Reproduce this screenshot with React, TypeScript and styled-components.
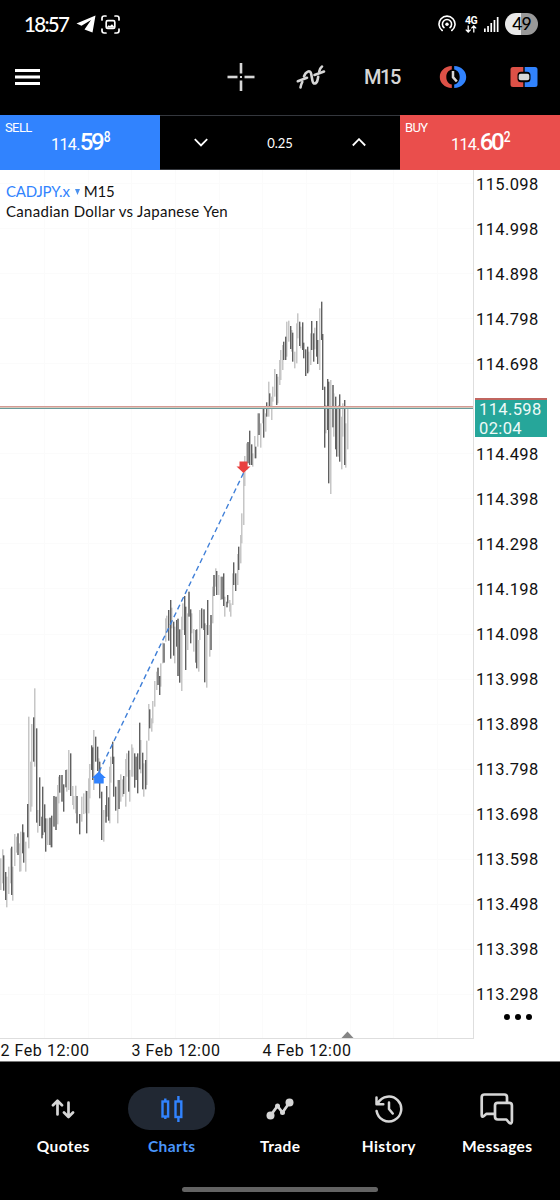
import React from 'react';
import styled, { createGlobalStyle } from 'styled-components';

const GlobalStyle = createGlobalStyle`
  * { box-sizing: border-box; }
  body { margin: 0; background: #000; }
`;

const BLUE = '#3183fe';
const RED = '#ea4e4c';
const ICON = '#d6d6d6';
const HAND = `'Lato', 'Open Sans', sans-serif`;

const Screen = styled.div`
  width: 560px;
  height: 1200px;
  display: flex;
  flex-direction: column;
  overflow: hidden;
  background: #000;
  font-family: Roboto, sans-serif;
`;

const StatusBar = styled.div`
  height: 48px;
  padding: 0 22px 0 24px;
  display: flex;
  align-items: center;
  color: #fff;
  svg { display: block; flex: none; }
`;
const Clock = styled.span`
  width: 47px;
  margin-right: 5px;
  font: 500 20.5px/24px ${HAND};
  letter-spacing: -1.7px;
  white-space: nowrap;
`;
const StatusIcons = styled.div`
  margin-left: auto;
  display: flex;
  align-items: center;
`;
const Network = styled.div`
  width: 14px;
  margin: 0 6px 0 8px;
  display: flex;
  flex-direction: column;
  align-items: center;
  font: 700 10.5px/9px Roboto, sans-serif;
  letter-spacing: -0.5px;
`;
const Battery = styled.div`
  width: 33px;
  height: 22px;
  margin-left: 6px;
  border-radius: 11px;
  background: linear-gradient(90deg, #e9e9e9 49%, #999 49%);
  color: #000;
  font: 500 17.5px/22px ${HAND};
  letter-spacing: -1px;
  text-align: center;
`;

const Toolbar = styled.div`
  height: 67px;
  padding: 0 22px 9px 14px;
  display: flex;
  align-items: center;
  svg { display: block; flex: none; }
`;
const Tools = styled.div`
  margin-left: auto;
  display: flex;
  align-items: center;
`;
const Timeframe = styled.span`
  width: 36px;
  margin: 0 39px 0 38px;
  color: ${ICON};
  font: 500 20px/24px Roboto, sans-serif;
  white-space: nowrap;
  letter-spacing: -1.4px;
`;

const TradeBar = styled.div`
  height: 55px;
  display: grid;
  grid-template-columns: 160px 240px 160px;
`;
const Quote = styled.div<{ $color: string }>`
  padding: 5px 5px 0 5px;
  background: ${(p) => p.$color};
  color: #fff;
`;
const Side = styled.div`
  height: 14px;
  font: 400 13px/15px Roboto, sans-serif;
  letter-spacing: -0.6px;
`;
const Price = styled.div`
  height: 24px;
  margin-left: 46px;
  margin-top: -5px;
  display: flex;
  align-items: baseline;
  font: 400 16px/26px Roboto, sans-serif;
  letter-spacing: -0.6px;
  b { font-size: 24px; font-weight: 500; letter-spacing: -2.4px; margin-right: 2px; }
  sup { font-size: 15px; font-weight: 500; line-height: 1; vertical-align: baseline; transform: translate(-1px, -8.5px) scaleX(0.8); }
`;
const Volume = styled.div`
  display: flex;
  align-items: center;
  justify-content: space-between;
  padding: 0 34px;
  border-top: 1px solid #34373d;
  border-bottom: 1px solid #34373d;
  color: #fff;
  font: 400 13px/20px ${HAND};
`;

const ChartArea = styled.main`
  height: 892px;
  background: #fff;
  display: grid;
  grid-template-columns: 474px 86px;
  grid-template-rows: 869px 23px;
`;
const Plot = styled.div`
  position: relative;
  border-right: 1px solid #dedede;
  border-bottom: 1px solid #dedede;
  svg { display: block; }
`;
const Legend = styled.div`
  position: absolute;
  left: 6px;
  top: 11px;
  color: #111;
  font: 400 15px/20px ${HAND};
  white-space: nowrap;
`;
const SymbolRow = styled.div`
  display: flex;
  align-items: center;
  letter-spacing: -0.2px;
  i { color: ${BLUE}; font-style: normal; }
  svg { margin: 2px 4px 0 5px; }
`;
const Description = styled.div`
  letter-spacing: 0.3px;
`;
const PriceAxis = styled.div`
  padding: 4.5px 0 0 2px;
  display: flex;
  flex-direction: column;
  gap: 25.05px;
  color: #111;
  font-size: 16.5px;
  line-height: 20px;
  letter-spacing: 0.38px;
`;
const Tick = styled.div`
  position: relative;
  height: 20px;
  flex: none;
`;
const PriceTag = styled.div`
  position: absolute;
  left: -1px;
  top: -2px;
  width: 71.5px;
  height: 39px;
  padding: 0 0 0 4px;
  border-top: 2px solid #c0655f;
  background: #26a69a;
  color: #eefaf8;
  line-height: 19px;
`;
const More = styled.div`
  margin-top: -17px;
  padding-left: 27px;
  svg { display: block; }
`;
const TimeAxis = styled.div`
  grid-column: 1 / 3;
  display: flex;
  color: #111;
  font-size: 16px;
  line-height: 23px;
  letter-spacing: 0.55px;
  border-bottom: 1px solid #777;
`;
const Time = styled.span`
  width: 131px;
  padding-left: 0.5px;
  white-space: nowrap;
`;

const Nav = styled.nav`
  height: 128px;
  padding: 25px 9px 0;
  display: grid;
  grid-template-columns: repeat(5, 108.5px);
  align-content: start;
`;
const NavItem = styled.div<{ $active?: boolean }>`
  display: flex;
  flex-direction: column;
  align-items: center;
  gap: 5px;
  color: ${(p) => (p.$active ? '#4a96fb' : '#fff')};
  font: 700 15.5px/22px ${HAND};
  letter-spacing: 0.4px;
`;
const Pill = styled.div<{ $active?: boolean }>`
  width: 87px;
  height: 43px;
  border-radius: 22px;
  display: flex;
  align-items: center;
  justify-content: center;
  background: ${(p) => (p.$active ? '#212833' : 'transparent')};
  svg { display: block; }
`;
const HomeHandle = styled.div`
  width: 196px;
  height: 5px;
  margin: -3px auto 0;
  border-radius: 3px;
  background: #636363;
`;

/* Each bar is "x top bottom shade" in thirds of a pixel from its block's origin. */
const BLOCKS = [
  {
    x: 0, y: 670,
    bars: `2 565 660 L;8 538 640 L;12 556 662 D;16 606 690 D;21 620 712 L;26 590 672 L;31 535 640 L;34 530 675 D;39 590 692 L;44 492 588 L;49 500 548 L;53 490 555 M;58 520 605 L;63 485 604 L;67 463 550 D;72 487 578 D;77 515 605 L;82 402 502 D;86 140 535 L;91 275 425 L;95 162 410 L;100 142 275 D;105 55 290 L;109 175 458 D;114 420 488 L;119 322 468 D;124 440 505 M;128 350 495 D;133 403 487 D;138 445 545 D;142 445 525 L;148 443 525 M;151 495 532 L;156 437 532 D;162 378 470 M;167 380 480 M;172 345 463 L;176 320 400 L;180 315 368 D;185 315 395 M;190 343 425 D;196 300 352 M;201 298 365 L;207 240 360 L;212 250 378 D;217 348 405 L;221 378 418 L;226 347 430 L;231 378 460 M;240 432 493 D;246 380 455 L;251 370 432 L;256 362 430 L;260 363 490 D;265 325 430 L;270 282 385 L;274 226 300 D;278 232 330 D;282 180 360 L;287 200 275 D;292 230 303 D;296 265 340 L;300 275 385 D;306 365 510 D;311 420 515 L;316 405 458 M;320 348 440 D;325 382 452 D`,
  },
  {
    x: 90, y: 580,
    bars: `58 560 730 L;62 530 608 L;67 485 552 D;72 530 650 D;77 620 692 D;83 600 730 L;87 600 687 M;92 583 665 L;97 598 650 L;100 588 642 D;106 537 680 L;111 520 590 L;115 512 635 D;120 570 665 L;125 493 590 L;129 503 590 L;133 520 623 D;138 530 600 M;143 520 640 D;148 428 568 D;152 480 580 L;157 518 628 D;162 550 650 L;167 540 628 D;171 482 615 L;175 372 482 L;180 388 445 D;184 415 455 L;189 363 430 L;194 303 380 L;199 275 330 L;204 263 315 M;208 288 345 D;213 250 320 L;218 188 250 L;222 190 248 M;227 115 185 L;231 107 150 L;236 90 182 D;241 60 236 D;246 83 145 L;250 125 227 D;255 140 250 L;260 120 200 D;264 116 288 M;269 148 308 D;274 110 333 L;279 70 150 L;284 48 165 D;288 80 270 D;293 100 210 L;297 35 110 M;301 88 190 D;306 100 160 L;312 147 215 L;316 150 248 M;320 148 265 D;325 180 275 L;330 90 180 L;335 85 145 D;340 88 150 M;345 130 307 D;349 135 323 L;353 60 165 D;358 135 230 L;363 105 210 M;367 20 130 L`,
  },
  {
    x: 160, y: 430,
    bars: `162 435 498 M;167 415 470 L;171 423 495 D;176 435 495 L;181 440 510 L;186 440 508 M;190 430 528 D;195 500 560 L;200 515 532 M;204 495 520 D;209 510 545 L;213 520 560 L;217 430 525 L;222 397 465 D;227 430 483 D;232 372 465 L;236 350 420 D;241 315 400 L;245 250 340 L;250 100 285 L`,
  },
  {
    x: 240, y: 290,
    bars: `15 498 588 L;20 460 540 L;24 456 520 M;29 422 525 D;34 463 525 D;39 490 530 L;43 438 505 L;48 470 505 D;53 370 470 L;57 370 435 M;62 400 473 L;67 355 400 L;71 353 443 D;76 370 425 L;81 337 380 D;85 275 380 L;90 310 350 D;95 320 390 L;99 290 335 L;104 237 320 L;109 252 345 D;113 260 340 L;118 210 285 L;123 180 270 L;127 165 240 L;132 155 210 D;137 140 210 D;141 95 200 L;146 92 155 L;151 108 177 D;155 120 185 L;159 128 215 D;164 185 235 L;169 100 220 L;174 70 145 L;179 95 168 D;183 110 175 L;188 97 180 D;192 158 205 D;197 178 258 D;202 170 250 D;206 185 245 L;211 130 225 L;216 93 180 D;220 130 215 D;225 113 178 L;230 93 200 D;234 150 222 D;239 55 240 L;244 35 150 D;248 132 300 D;253 290 473 D;258 345 430 L;262 267 420 D;267 275 580 D;272 270 612 L;277 285 412 M;281 310 440 L;286 320 478 D;291 350 500 D;295 345 500 L;300 313 515 D;305 380 538 L;309 340 440 L;314 330 525 D;318 400 533 L;323 355 478 L`,
  },
];
const SHADES: Record<string, { fill: string; width: number }> = {
  L: { fill: '#c6c6c6', width: 1.5 },
  M: { fill: '#868686', width: 2 },
  D: { fill: '#606060', width: 1.4 },
};
const BARS = BLOCKS.flatMap((block) =>
  block.bars.split(';').map((item) => {
    const [x, top, bottom, shade] = item.split(' ');
    return {
      x: block.x + Math.round(Number(x) / 3 - 0.7),
      y: block.y - 170 + Number(top) / 3,
      h: (Number(bottom) - Number(top)) / 3,
      shade,
    };
  }),
).sort((a, b) => Number(b.shade === 'L') - Number(a.shade === 'L'));
const GRID_X = [44, 88, 131, 175, 219, 262, 306, 350, 393, 437];
const TICKS = Array.from({ length: 19 }, (_, i) => (115.098 - i / 10).toFixed(3));

const PriceChart = () => (
  <svg width="473" height="868" viewBox="0 0 473 868">
    {GRID_X.map((x) => <rect key={x} x={x} y="0" width="1" height="868" fill="#fbfbfb" />)}
    {TICKS.map((t, i) => <rect key={t} x="0" y={Math.round(13 + i * 45.05)} width="473" height="1" fill="#fbfbfb" />)}
    {BARS.map((b, i) => (
      <rect key={i} x={b.x} y={b.y} width={SHADES[b.shade].width} height={b.h} fill={SHADES[b.shade].fill} />
    ))}
    <rect x="0" y="236" width="473" height="1" fill="#d49a94" />
    <rect x="0" y="237" width="473" height="1" fill="#d9c9bb" />
    <rect x="0" y="238" width="473" height="1" fill="#6b9c9c" />
    <path d="M99 602 244 302" stroke="#3f7fd8" strokeWidth="1.4" strokeDasharray="5.2 3.4" />
    <path d="m98.900 601.500 7 6.500h-2.200v5.500h-9.600v-5.500h-2.200z" fill={BLUE} />
    <path d="m243.500 303-7-6.500h3v-5h8v5h3z" fill="#e9403f" />
    <path d="m341.500 868 6-6.500 6 6.500z" fill="#858585" />
  </svg>
);

const TelegramIcon = () => (
  <svg width="20" height="18" viewBox="0 0 20 18">
    <path d="M.5 8.500 19.500.5 16.500 17.500 8.500 14.500 15 5 5.500 10.800z" fill="#fff" />
  </svg>
);
const CaptureIcon = () => (
  <svg width="19" height="19" viewBox="0 0 19 19" fill="none" stroke="#fff" strokeWidth="1.7" strokeLinecap="round">
    <path d="M1 5V3.200Q1 1 3.200 1H5M14 1h1.800Q18 1 18 3.200V5M18 14v1.800q0 2.200-2.200 2.200H14M5 18H3.200Q1 18 1 15.800V14" />
    <rect x="5.200" y="5.700" width="8.600" height="7.800" rx="1.500" />
    <path d="m6 12 1.600-1.800 1.400.8 2-1.800 2 2.300v1.200H6z" fill="#fff" stroke="none" />
  </svg>
);
const HotspotIcon = () => (
  <svg width="18" height="18" viewBox="0 0 18 18" fill="none" stroke="#fff" strokeWidth="1.6" strokeLinecap="round">
    <path d="M4.200 15.500a8 8 0 1 1 9.600 0" />
    <path d="M6 12.600a4.600 4.600 0 1 1 6 0" />
    <circle cx="9" cy="9.300" r="1.700" fill="#fff" stroke="none" />
  </svg>
);
const DataArrows = () => (
  <svg width="12" height="8" viewBox="0 0 12 8" fill="none" stroke="#fff" strokeWidth="1.300">
    <path d="M3.200.5V7M.8 4.600 3.200 7l2.400-2.400M8.800 7.500V1M6.400 3.400 8.800 1l2.400 2.400" />
  </svg>
);
const SignalIcon = () => (
  <svg width="15" height="16" viewBox="0 0 15 16" fill="#fff">
    <rect x="0" y="12.500" width="1.700" height="3.500" /><rect x="3.200" y="10" width="1.700" height="6" />
    <rect x="6.400" y="7" width="1.700" height="9" /><rect x="9.600" y="4" width="1.700" height="12" />
    <rect x="12.800" y="1" width="1.700" height="15" />
  </svg>
);
const MenuIcon = () => (
  <svg width="26" height="18" viewBox="0 0 26 18" fill="#fff">
    <rect x="1" y="1" width="25" height="3" /><rect x="1" y="7.500" width="25" height="3" /><rect x="1" y="14" width="25" height="3" />
  </svg>
);
const CrosshairIcon = () => (
  <svg width="28" height="28" viewBox="0 0 28 28" fill={ICON}>
    <rect x="12.700" y="0" width="2.600" height="10.500" /><rect x="12.700" y="17.500" width="2.600" height="10.500" />
    <rect x="0.500" y="12.700" width="10" height="2.600" /><rect x="17.500" y="12.700" width="10" height="2.600" />
    <rect x="13" y="13" width="2" height="2" />
  </svg>
);
const IndicatorIcon = () => (
  <svg width="30" height="26" viewBox="0 0 30 26" fill="none" stroke={ICON} strokeWidth="2.600" strokeLinecap="round">
    <path d="M1.800 17.200 11 13.800M18.500 11 28 7.500" />
    <path d="M4.500 23.500C5 20.500 5.500 19.500 6.300 18M8 12.500C9.500 7.800 14.300 5 15.200 10l1.200 6.500c.9 4.800 4.500 3.600 5.300-1.200l.5-2.500M23.200 7.500c.6-2.200 1.200-3.800 2.800-5" />
  </svg>
);
const SessionIcon = () => (
  <svg width="28" height="24" viewBox="0 0 28 24">
    <path d="M12.800 1v3.400C9.500 5 7.300 8 7.300 12s2.200 7 5.500 7.600V23C5.500 22.500.8 18 .8 12S5.500 1.500 12.800 1z" fill="#dd5147" />
    <path d="M15.200 1v3.400c3.300.6 5.500 3.600 5.500 7.600s-2.200 7-5.500 7.600V23c7.300-.5 12-5 12-11s-4.700-10.500-12-11z" fill={BLUE} />
    <path d="M14 6v6.200l3.800 4.300" fill="none" stroke={ICON} strokeWidth="2.500" />
  </svg>
);
const OneClickIcon = () => (
  <svg width="28" height="22" viewBox="0 0 28 22">
    <path d="M3 1h10.300v4.800H11A3.500 3.500 0 0 0 7.500 9.300v3.400a3.500 3.500 0 0 0 3.500 3.500h2.300V21H3q-2.500 0-2.500-2.500v-15Q.5 1 3 1z" fill="#dd5147" />
    <path d="M25 1H14.700v4.800H17a3.500 3.500 0 0 1 3.500 3.500v3.400a3.500 3.500 0 0 1-3.500 3.500h-2.300V21H25q2.500 0 2.500-2.500v-15Q27.500 1 25 1z" fill={BLUE} />
    <rect x="8.700" y="7.700" width="10.600" height="6.600" rx="2" fill={ICON} />
  </svg>
);
const Chevron = ({ up }: { up?: boolean }) => (
  <svg width="14" height="9" viewBox="0 0 14 9" fill="none" stroke="#fff" strokeWidth="1.800">
    <path d={up ? 'M.8 7.500 7 1.200l6.200 6.300' : 'M.8 1.200 7 7.500l6.200-6.300'} />
  </svg>
);

const QuotesIcon = () => (
  <svg width="24" height="20" viewBox="0 0 24 20" fill="none" stroke={ICON} strokeWidth="2.700" strokeLinecap="round" strokeLinejoin="round">
    <path d="M6.500 15.500V2M2 6.200 6.500 1.700 11 6.200M17.500 3.700v14M13 13.500l4.500 4.500 4.500-4.500" />
  </svg>
);
const ChartsIcon = () => (
  <svg width="22" height="26" viewBox="0 0 22 26" fill="none" stroke={BLUE} strokeWidth="2.400">
    <rect x="1.500" y="5.500" width="5.600" height="15" /><path d="M4.300 2.500v3M4.300 20.500V23" />
    <rect x="14.500" y="5.500" width="5.800" height="15.500" /><path d="M17.400 0v5.500M17.400 21v5" />
  </svg>
);
const TradeIcon = () => (
  <svg width="28" height="22" viewBox="0 0 28 22" fill={ICON} stroke={ICON}>
    <path d="M4.500 17.500 11.500 8 16.500 14.500 23.500 4.500" fill="none" strokeWidth="2.800" />
    <g stroke="none"><circle cx="4.500" cy="17.500" r="4" /><circle cx="11.500" cy="8" r="2.500" /><circle cx="16.500" cy="14.500" r="2.500" /><circle cx="23.500" cy="4.500" r="4" /></g>
  </svg>
);
const HistoryIcon = () => (
  <svg width="28" height="28" viewBox="0 0 28 28" fill="none" stroke={ICON} strokeWidth="2.500" strokeLinecap="round" strokeLinejoin="round">
    <path d="M1.600 16A12.400 12.400 0 1 0 3 8M1.500 2.500v6.800h6.800M14 7.500V14l3.700 4.500" />
  </svg>
);
const MessagesIcon = () => (
  <svg width="34" height="32" viewBox="0 0 34 32" fill="none" stroke={ICON} strokeWidth="2.700" strokeLinejoin="round">
    <path d="M27 9V4.200Q27 1.500 24.300 1.500H4.500Q1.700 1.500 1.700 4.300V22Q1.700 25 4.200 22.700L6.500 20.800H14" />
    <path d="M17.700 9.800h11.500q2.700 0 2.700 2.700V28q0 4-3 1.500l-2.500-3h-8.700q-2.700 0-2.700-2.700V12.500q0-2.700 2.700-2.700z" />
  </svg>
);

const NAV = [
  { label: 'Quotes', icon: <QuotesIcon /> },
  { label: 'Charts', icon: <ChartsIcon />, active: true },
  { label: 'Trade', icon: <TradeIcon /> },
  { label: 'History', icon: <HistoryIcon /> },
  { label: 'Messages', icon: <MessagesIcon /> },
];

const Spaced = styled.span<{ $right: number }>`
  margin-right: ${(p) => p.$right}px;
`;

export default function App() {
  return (
    <Screen>
      <GlobalStyle />
      <StatusBar>
        <Clock>18:57</Clock>
        <Spaced $right={5}><TelegramIcon /></Spaced>
        <CaptureIcon />
        <StatusIcons>
          <HotspotIcon />
          <Network>4G<DataArrows /></Network>
          <SignalIcon />
          <Battery>49</Battery>
        </StatusIcons>
      </StatusBar>
      <Toolbar>
        <MenuIcon />
        <Tools>
          <Spaced $right={41}><CrosshairIcon /></Spaced>
          <IndicatorIcon />
          <Timeframe>M15</Timeframe>
          <Spaced $right={43}><SessionIcon /></Spaced>
          <OneClickIcon />
        </Tools>
      </Toolbar>
      <TradeBar>
        <Quote $color={BLUE}>
          <Side>SELL</Side>
          <Price>114.<b>59</b><sup>8</sup></Price>
        </Quote>
        <Volume><Chevron /><span>0.25</span><Chevron up /></Volume>
        <Quote $color={RED}>
          <Side>BUY</Side>
          <Price>114.<b>60</b><sup>2</sup></Price>
        </Quote>
      </TradeBar>
      <ChartArea>
        <Plot>
          <PriceChart />
          <Legend>
            <SymbolRow>
              <i>CADJPY.x</i>
              <svg width="5" height="6" viewBox="0 0 5 6"><path d="M0 0h5L2.500 6z" fill="#4b91ee" /></svg>
              M15
            </SymbolRow>
            <Description>Canadian Dollar vs Japanese Yen</Description>
          </Legend>
        </Plot>
        <PriceAxis>
          {TICKS.map((t) => (
            <Tick key={t}>
              {t === '114.598' ? <PriceTag>{t}<br />02:04</PriceTag> : t}
            </Tick>
          ))}
          <More>
            <svg width="30" height="8" viewBox="0 0 30 8"><circle cx="4" cy="4" r="3" /><circle cx="15" cy="4" r="3" /><circle cx="26" cy="4" r="3" /></svg>
          </More>
        </PriceAxis>
        <TimeAxis>
          <Time>2 Feb 12:00</Time><Time>3 Feb 12:00</Time><Time>4 Feb 12:00</Time>
        </TimeAxis>
      </ChartArea>
      <Nav>
        {NAV.map((n) => (
          <NavItem key={n.label} $active={n.active}>
            <Pill $active={n.active}>{n.icon}</Pill>
            {n.label}
          </NavItem>
        ))}
      </Nav>
      <HomeHandle />
    </Screen>
  );
}
